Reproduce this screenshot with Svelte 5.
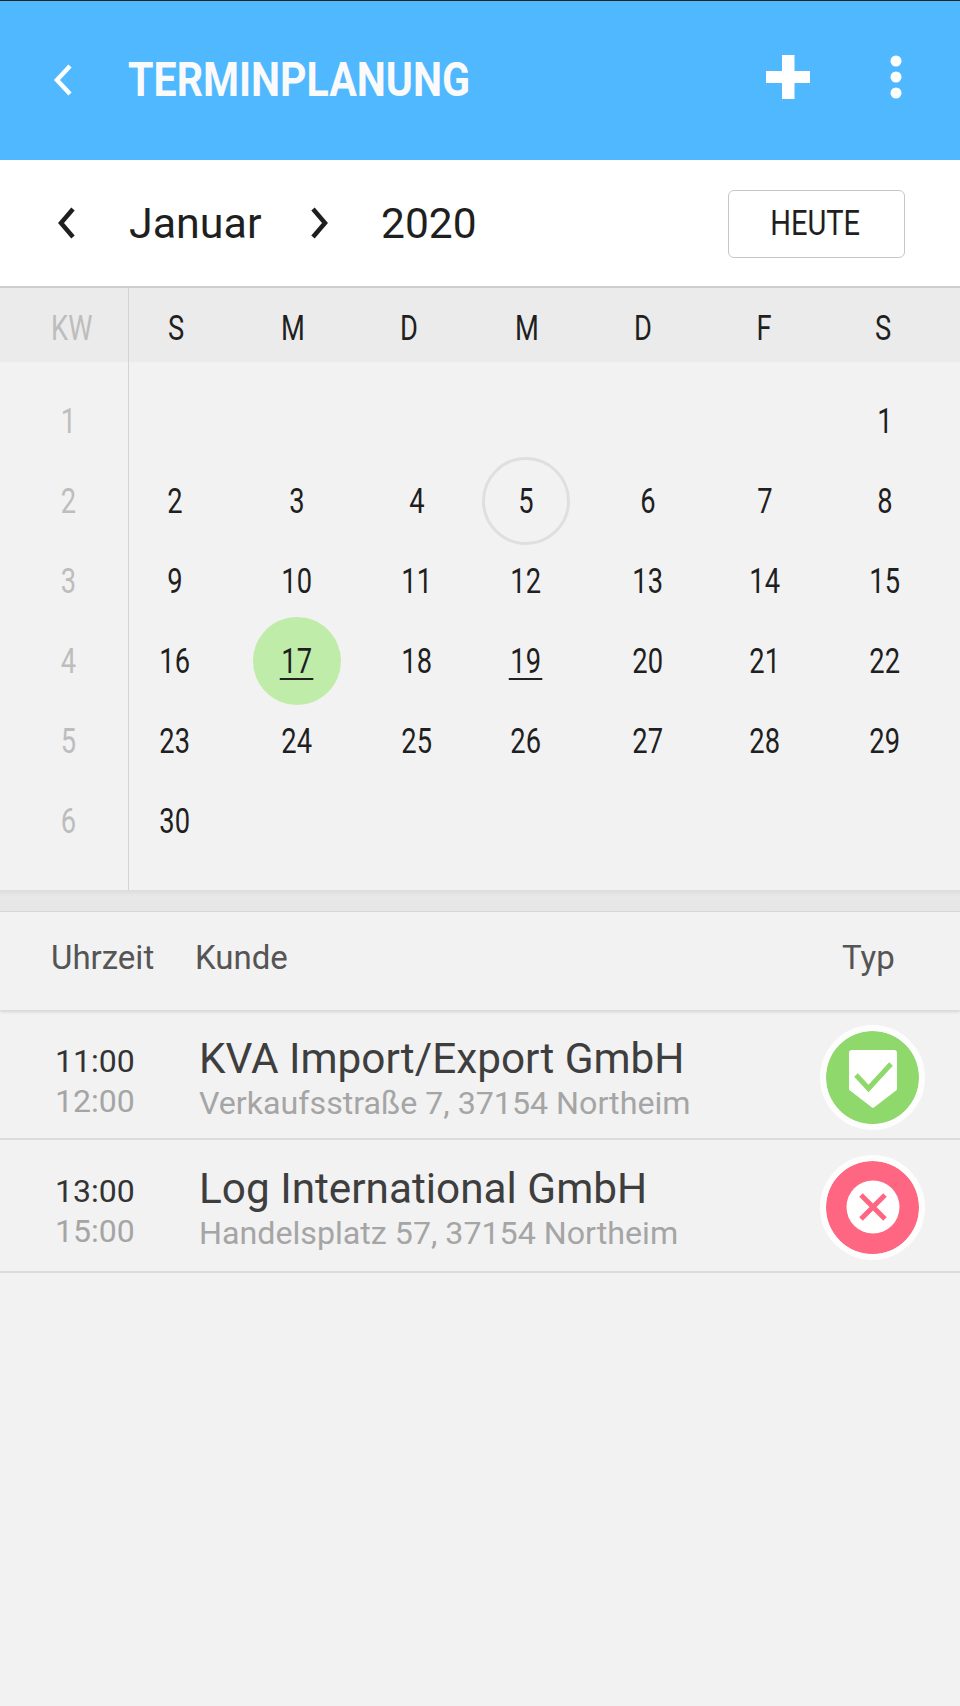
<script>
  const weekdays = ['S', 'M', 'D', 'M', 'D', 'F', 'S'];
  const weeks = [1, 2, 3, 4, 5, 6];

  // leading blanks: January 2020 starts on the last column here
  const days = [
    ...Array(6).fill(null),
    ...Array.from({ length: 30 }, (_, i) => i + 1)
  ];

  const appointments = [
    {
      from: '11:00',
      to: '12:00',
      name: 'KVA Import/Export GmbH',
      address: 'Verkaufsstraße 7, 37154 Northeim',
      type: 'ok'
    },
    {
      from: '13:00',
      to: '15:00',
      name: 'Log International GmbH',
      address: 'Handelsplatz 57, 37154 Northeim',
      type: 'cancel'
    }
  ];
</script>

<div class="page">
  <header class="topbar">
    <svg class="back" width="20" height="32" viewBox="0 0 20 32">
      <path d="M17 2 L4 16 L17 30" fill="none" stroke="#fff" stroke-width="4.5" />
    </svg>
    <h1>TERMINPLANUNG</h1>
    <svg class="plus" width="44" height="44" viewBox="0 0 44 44">
      <path d="M16 0h12.500v16H44v12H28.500v16H16V28H0V16h16z" fill="#fff" />
    </svg>
    <svg class="more" width="12" height="44" viewBox="0 0 12 44">
      <circle cx="6" cy="6" r="5.500" fill="#fff" />
      <circle cx="6" cy="22" r="5.500" fill="#fff" />
      <circle cx="6" cy="38" r="5.500" fill="#fff" />
    </svg>
  </header>

  <nav class="monthbar">
    <svg class="prev" width="20" height="32" viewBox="0 0 20 32">
      <path d="M17 2 L5 16 L17 30" fill="none" stroke="#1f1f1f" stroke-width="4.500" />
    </svg>
    <span class="month">Januar</span>
    <svg class="next" width="20" height="32" viewBox="0 0 20 32">
      <path d="M3 2 L15 16 L3 30" fill="none" stroke="#1f1f1f" stroke-width="4.500" />
    </svg>
    <span class="year">2020</span>
    <button class="today"><span>HEUTE</span></button>
  </nav>

  <section class="calendar">
    <div class="weekrow">
      <div class="kw-head"><span>KW</span></div>
      <div class="weekdays">
        {#each weekdays as day}
          <span>{day}</span>
        {/each}
      </div>
    </div>
    <div class="cal-body">
      <div class="kw-col">
        {#each weeks as week}
          <span>{week}</span>
        {/each}
      </div>
      <div class="days">
        {#each days as day}
          <div class="cell">
            {#if day}
              <div class="num" class:current={day === 5} class:selected={day === 17}>
                <span class:marked={day === 17 || day === 19}>{day}</span>
              </div>
            {/if}
          </div>
        {/each}
      </div>
    </div>
  </section>

  <div class="band"></div>

  <div class="list-head">
    <span class="col-time">Uhrzeit</span>
    <span class="col-name">Kunde</span>
    <span class="col-type">Typ</span>
  </div>

  {#each appointments as item}
    <div class="row">
      <div class="times">
        <span class="from">{item.from}</span>
        <span class="to">{item.to}</span>
      </div>
      <div class="info">
        <span class="name">{item.name}</span>
        <span class="address">{item.address}</span>
      </div>
      <div class="badge {item.type}">
        {#if item.type === 'ok'}
          <svg width="64" height="64" viewBox="-32 -32 64 64">
            <path d="M-21-27h42a3 3 0 0 1 3 3v36a2 2 0 0 1-1 1.500L1 30.500a2 2 0 0 1-2 0L-23 13.500a2 2 0 0 1-1-1.500v-36a3 3 0 0 1 3-3z" fill="#fff" />
            <path d="M-17-2-4.500 11.500 18-13" fill="none" stroke="#8fd86b" stroke-width="5" />
          </svg>
        {:else}
          <svg width="54" height="54" viewBox="-27 -27 54 54">
            <circle r="26.500" fill="#fff" />
            <path d="M-12-12 12 12M12-12-12 12" fill="none" stroke="#ff6682" stroke-width="5" />
          </svg>
        {/if}
      </div>
    </div>
  {/each}
</div>

<style>
  :global(body) {
    margin: 0;
    background: #f2f2f2;
  }
  .page {
    height: 1706px;
    overflow: hidden;
    background: #f2f2f2;
    font-family: Roboto, "Liberation Sans", sans-serif;
    color: #1f1f1f;
  }
  .topbar {
    box-sizing: border-box;
    height: 160px;
    border-top: 1px solid #222;
    background: #4fb8ff;
    display: flex;
    align-items: center;
    padding: 0 0 2px 53px;
  }
  h1 {
    margin: 0 0 0 55px;
    width: 638px;
    font-size: 48px;
    font-weight: 700;
    color: #fafafa;
    transform: scaleX(0.857);
    transform-origin: left;
  }
  .plus {
    margin-top: -6px;
  }
  .more {
    margin: -6px 0 0 80px;
  }
  .monthbar {
    box-sizing: border-box;
    height: 126px;
    background: #fff;
    display: flex;
    align-items: center;
    padding: 0 55px 0 56px;
  }
  .month {
    margin-left: 53px;
    width: 181px;
    font-size: 43px;
  }
  .year {
    margin-left: 51px;
    font-size: 42.500px;
  }
  .today {
    margin: 1px 0 0 auto;
    width: 177px;
    height: 68px;
    padding: 0 2px 0 0;
    background: #fff;
    border: 1.500px solid #c6c6c6;
    border-radius: 6px;
    font-family: inherit;
    font-size: 35px;
    color: #1f1f1f;
  }
  .today span {
    display: inline-block;
    transform: scaleX(0.83);
  }
  .calendar {
    border-top: 2px solid #cdcdcd;
    height: 604px;
    box-sizing: border-box;
    font-size: 35px;
  }
  .weekrow {
    height: 74px;
    background: #ebebeb;
    display: flex;
  }
  .kw-head {
    box-sizing: border-box;
    width: 129px;
    border-right: 1.500px solid #d4d4d4;
    padding-left: 51px;
    line-height: 81px;
    color: #bdbdbd;
  }
  .kw-head span {
    display: inline-block;
    transform: scaleX(0.78);
    transform-origin: left;
  }
  .weekdays {
    margin-left: -15px;
    display: grid;
    grid-template-columns: 124px 110px 122px 114px 118px 124px 114px;
    line-height: 81px;
    text-align: center;
  }
  .weekdays span {
    transform: scaleX(0.78);
  }
  .cal-body {
    display: flex;
    height: 528px;
  }
  .kw-col {
    box-sizing: border-box;
    width: 129px;
    border-right: 1.500px solid #d4d4d4;
    padding-top: 20px;
    display: flex;
    flex-direction: column;
    color: #bdbdbd;
  }
  .kw-col span {
    flex: none;
    width: 137px;
    height: 80px;
    line-height: 80px;
    text-align: center;
    transform: scaleX(0.78);
  }
  .days {
    margin-left: -15px;
    padding-top: 18.500px;
    display: grid;
    grid-template-columns: 122px 122px 118px 99px 145px 90px 150px;
    grid-auto-rows: 80px;
  }
  .cell {
    display: flex;
    align-items: center;
    justify-content: center;
  }
  .num {
    box-sizing: border-box;
    flex: none;
    width: 88px;
    height: 88px;
    border-radius: 50%;
    display: flex;
    align-items: center;
    justify-content: center;
  }
  .current {
    border: 3.500px solid #dfdfdf;
  }
  .selected {
    background: #bfeca8;
  }
  .num span {
    margin-top: 4px;
    padding: 0 2px;
    line-height: 32px;
    border-bottom: 2px solid transparent;
    transform: scaleX(0.78);
  }
  .num span.marked {
    border-bottom-color: #222;
  }
  .band {
    height: 22px;
    background: linear-gradient(#dcdcdc, #e8e8e8 30%, #e6e6e6);
    border-bottom: 1px solid #d8d8d8;
    box-sizing: border-box;
  }
  .list-head {
    box-sizing: border-box;
    height: 98px;
    display: flex;
    align-items: center;
    padding-bottom: 7px;
    font-size: 33px;
    color: #555;
    box-shadow: 0 2px 3px rgba(0, 0, 0, 0.12);
  }
  .col-time {
    margin-left: 51px;
    width: 144px;
  }
  .col-name {
    width: 647px;
  }
  .row {
    box-sizing: border-box;
    height: 130px;
    padding-top: 6px;
    border-bottom: 2px solid #dcdcdc;
    display: flex;
    align-items: center;
  }
  .row:last-child {
    height: 133px;
    padding-bottom: 3px;
  }
  .times {
    margin: 8px 0 0 55px;
    width: 144px;
    display: flex;
    flex-direction: column;
    font-size: 32px;
    line-height: 40px;
    color: #333;
  }
  .to {
    color: #a5a5a5;
  }
  .info {
    margin-top: 5px;
    width: 621px;
    display: flex;
    flex-direction: column;
  }
  .name {
    font-size: 42.300px;
    line-height: 46px;
    color: #3e3e3e;
  }
  .address {
    font-size: 32.200px;
    line-height: 42px;
    color: #a5a5a5;
  }
  .badge {
    flex: none;
    box-sizing: border-box;
    width: 105px;
    height: 105px;
    border: 6.500px solid #fdfdfd;
    border-radius: 50%;
    background-clip: padding-box;
    display: flex;
    align-items: center;
    justify-content: center;
  }
  .ok {
    background-color: #8fd86b;
  }
  .cancel {
    background-color: #ff6682;
  }
</style>
